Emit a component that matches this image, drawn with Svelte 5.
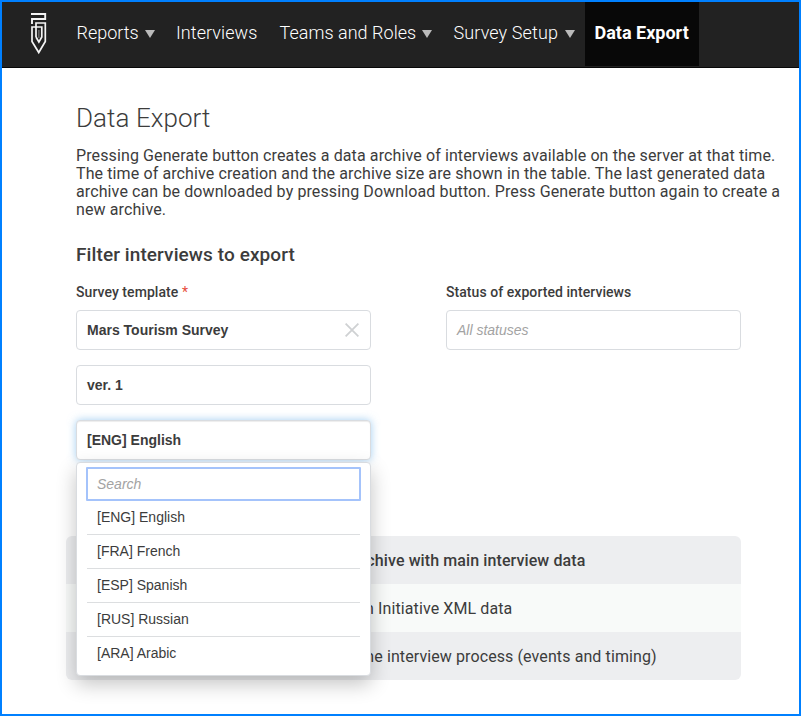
<script>
  const nav = [
    { label: 'Reports', menu: true, cls: 'reports' },
    { label: 'Interviews', cls: 'interviews' },
    { label: 'Teams and Roles', menu: true, cls: 'teams' },
    { label: 'Survey Setup', menu: true, cls: 'setup' },
    { label: 'Data Export', active: true, cls: 'export' }
  ];
  const languages = ['[ENG] English', '[FRA] French', '[ESP] Spanish', '[RUS] Russian', '[ARA] Arabic'];
</script>

<div class="page">
  <header>
    <svg class="logo" width="16" height="42" viewBox="0 0 16 42" fill="none" stroke="#f4f4f4" stroke-width="1.9">
      <path d="M0 1H14.2V6H1V11" />
      <path d="M5 24V10H14.3V28.5L7.75 39.5L1 28.5V14H10.8V24L7.9 29L5 24" stroke-width="1.7" />
      <path d="M7.9 17V25" stroke="#8c8c8c" stroke-width="1" />
    </svg>
    <nav>
      {#each nav as item}
        <a class={item.cls} class:active={item.active}>
          <span>{item.label}</span>
          {#if item.menu}<i class="caret"></i>{/if}
        </a>
      {/each}
    </nav>
  </header>

  <main>
    <h1>Data Export</h1>
    <p class="intro">
      <span>Pressing Generate button creates a data archive of interviews available on the server at that time.</span><br />
      <span>The time of archive creation and the archive size are shown in the table. The last generated data</span><br />
      <span>archive can be downloaded by pressing Download button. Press Generate button again to create a</span><br />
      <span>new archive.</span>
    </p>
    <h2>Filter interviews to export</h2>

    <div class="filters">
      <div class="column">
        <div class="label">Survey template <em>*</em></div>
        <div class="field">
          <b>Mars Tourism Survey</b>
          <svg width="14" height="14" viewBox="0 0 14 14" stroke="#cfd1d3" stroke-width="1.8"><path d="M.6 .6L13.4 13.4M13.4 .6L.6 13.4" /></svg>
        </div>
        <div class="field"><b>ver. 1</b></div>
        <div class="field focused">
          <b>[ENG] English</b>
          <div class="dropdown">
            <div class="search">Search</div>
            <ul>
              {#each languages as lang}
                <li>{lang}</li>
              {/each}
            </ul>
          </div>
        </div>
      </div>
      <div class="column">
        <div class="label">Status of exported interviews</div>
        <div class="field"><span class="placeholder">All statuses</span></div>
      </div>
    </div>

    <div class="table">
      <div class="row main-data">archive with main interview data</div>
      <div class="row ddi">Documentation Initiative XML data</div>
      <div class="row process">the interview process (events and timing)</div>
    </div>
  </main>
</div>

<style>
  :global(body) { margin: 0; }
  .page {
    box-sizing: border-box;
    width: 801px;
    height: 716px;
    border: 2px solid #0080ff;
    background: #fff;
    color: #3c3c3c;
    font-family: Roboto, sans-serif;
    overflow: hidden;
  }
  header {
    box-sizing: border-box;
    height: 66px;
    display: flex;
    background: #222;
    border-bottom: 1px solid #080808;
  }
  .logo { margin: 11px 18px 0 29px; flex: none; }
  nav { display: flex; }
  nav a {
    box-sizing: border-box;
    height: 64px;
    padding: 0 10px 3px;
    display: flex;
    align-items: center;
    font-size: 18px;
    color: #fff;
    font-weight: 300;
    white-space: nowrap;
  }
  nav a.reports { width: 101px; padding-left: 11.5px; }
  nav a.interviews { width: 103.5px; letter-spacing: .06px; }
  nav a.teams { width: 174px; letter-spacing: .03px; }
  nav a.setup { width: 141.5px; letter-spacing: .12px; }
  nav a.export { width: 114px; padding-left: 9.5px; }
  nav a.active { background: #080808; font-weight: 700; }
  .caret {
    margin: 2px 0 0 6px;
    border: 5px solid transparent;
    border-top: 8px solid #bbb;
    border-bottom: 0;
  }
  .setup .caret { margin-left: 7px; }
  main { padding: 0 18px 0 74px; }
  h1 { margin: 34px 0 0; font-size: 26px; line-height: 32px; font-weight: 300; letter-spacing: .06px; }
  .intro { margin: 13px 0 0; font-size: 16px; line-height: 18px; letter-spacing: .112px; white-space: nowrap; }
  h2 { margin: 24px 0 0; font-size: 19px; line-height: 24px; font-weight: 500; letter-spacing: .1px; }
  .filters { display: flex; gap: 75px; height: 254px; margin-top: 15px; }
  .column { width: 295px; }
  .label { height: 28px; line-height: 20px; font-size: 14px; font-weight: 500; letter-spacing: .06px; }
  .label em { font-style: normal; color: #e74c3c; font-weight: 400; }
  .field {
    position: relative;
    box-sizing: border-box;
    height: 40px;
    margin-bottom: 15px;
    padding: 0 11px 0 10px;
    display: flex;
    align-items: center;
    justify-content: space-between;
    border: 1px solid #d9dce0;
    border-radius: 4px;
    background: #fff;
    font: 14px/20px "Liberation Sans", sans-serif;
    letter-spacing: 0;
    white-space: nowrap;
  }
  .focused { box-shadow: inset 0 1px 1px rgba(0, 0, 0, .075), 0 0 8px rgba(102, 175, 233, .6); }
  .placeholder, .search { color: #a3a3a3; font-style: italic; }
  .dropdown {
    position: absolute;
    z-index: 2;
    top: 41px;
    left: -1px;
    box-sizing: border-box;
    width: 295px;
    height: 214px;
    padding: 4px 9px;
    border: 1px solid #d9dce0;
    border-radius: 4px;
    background: #fff;
    box-shadow: 0 8px 20px rgba(0, 0, 0, .24);
  }
  .search {
    box-sizing: border-box;
    height: 34px;
    padding: 0 9px;
    border: 2px solid #a4c3fb;
    border-radius: 1px;
    line-height: 31px;
  }
  ul { list-style: none; margin: 0 1px; padding: 0; }
  li {
    box-sizing: border-box;
    height: 34px;
    padding-left: 10px;
    border-bottom: 1px solid #dcdee0;
    line-height: 32px;
  }
  li:last-child { border: 0; }
  .table {
    width: 675px;
    margin-left: -10px;
    border-radius: 6px;
    overflow: hidden;
    font-size: 16px;
  }
  .row { box-sizing: border-box; height: 48px; padding-top: 1px; line-height: 48px; background: #edeef0; white-space: nowrap; }
  .main-data { font-weight: 500; padding-left: 286px; letter-spacing: .1px; }
  .ddi { background: #f8faf9; padding-left: 197.5px; letter-spacing: .1px; }
  .process { padding-left: 294px; letter-spacing: .1px; }
</style>
